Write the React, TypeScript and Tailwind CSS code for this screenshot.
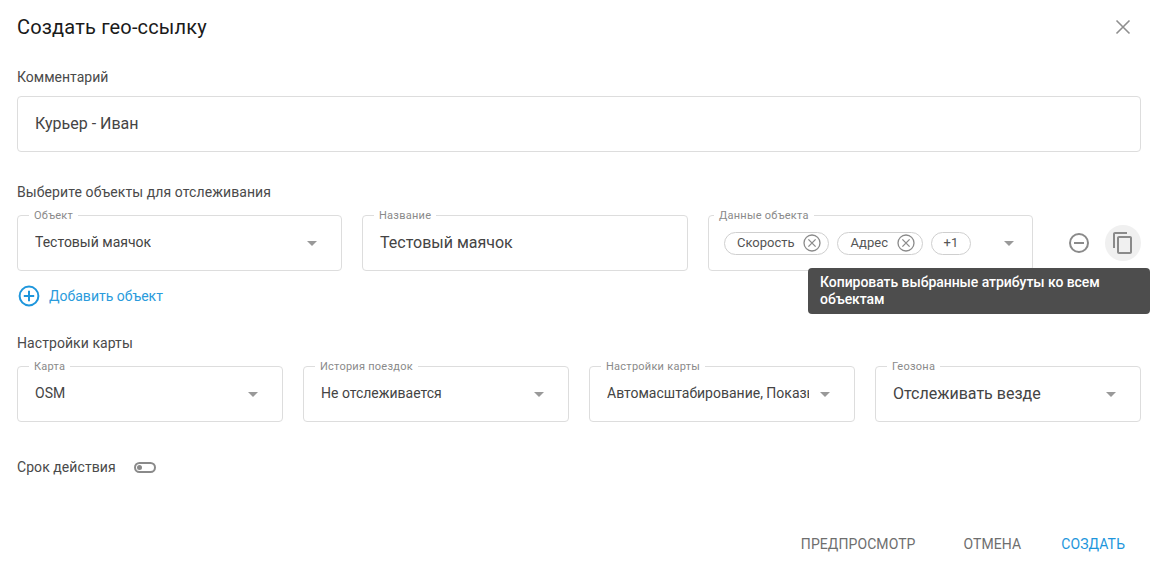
import React from "react";

const Caret = () => (
  <svg width="10" height="5" viewBox="0 0 10 5" className="shrink-0"><path d="M0 0h10L5 5z" fill="#999999" /></svg>
);

const ChipX = () => (
  <svg width="18" height="18" viewBox="0 0 18 18" fill="none" stroke="#8a8a8a" strokeWidth="1.3" className="shrink-0">
    <circle cx="9" cy="9" r="8" />
    <path d="M5.4 5.4l7.2 7.2M12.6 5.4l-7.2 7.2" />
  </svg>
);

function Field({ label, children, labelClass = "left-[11px]", className = "" }: { label: string; children: React.ReactNode; labelClass?: string; className?: string }) {
  return (
    <div className={`relative h-14 rounded border border-[#dddddd] flex items-center ${className}`}>
      <span className={`absolute -top-[7px] ${labelClass} bg-white px-[5px] text-[11px] leading-[13px] text-[#8a8a8a] tracking-[0.25px]`}>{label}</span>
      {children}
    </div>
  );
}

function SelectField({ label, value, large, pl = "pl-[17px]", pr = "pr-[24px]", caretGap }: { label: string; value: string; large?: boolean; pl?: string; pr?: string; caretGap?: string }) {
  return (
    <Field label={label}>
      <div className={`flex w-full items-center justify-between ${pl} ${pr}`}>
        <span className={`${large ? "text-base" : "text-sm mb-[2px]"} text-[#444444] whitespace-nowrap overflow-hidden ${caretGap ?? ""}`}>{value}</span>
        <Caret />
      </div>
    </Field>
  );
}

export default function App() {
  return (
    <div className="relative w-[1153px] h-[568px] overflow-hidden bg-white text-[#3c3c3c]" style={{ fontFamily: "Roboto, sans-serif" }}>
      <div className="flex flex-col pl-[17px] pr-3">
        <div className="flex h-[54px] items-center justify-between">
          <h1 className="text-xl font-normal tracking-[0.17px] text-[#1a1a1a]">Создать гео-ссылку</h1>
          <svg width="16" height="16" viewBox="0 0 16 16" stroke="#8f8f8f" strokeWidth="1.6" className="mr-[10px]"><path d="M1.5 1.5l13 13M14.5 1.5l-13 13" /></svg>
        </div>

        <div className="mt-[14px] text-sm leading-[18px] text-[#4a4a4a]">Комментарий</div>
        <div className="mt-[10px] flex h-14 items-center rounded border border-[#dddddd] pl-[17px] text-base text-[#444444]">Курьер - Иван</div>

        <div className="mt-[31px] text-sm leading-[18px] text-[#4a4a4a] tracking-[0.09px]">Выберите объекты для отслеживания</div>
        <div className="mt-[14px] flex items-center gap-5">
          <div className="w-[325px]"><SelectField label="Объект" value="Тестовый маячок" /></div>
          <div className="w-[326px]">
            <Field label="Название"><span className="pl-[17px] text-base text-[#444444]">Тестовый маячок</span></Field>
          </div>
          <div className="w-[325px]">
            <Field label="Данные объекта" labelClass="left-[5px]">
              <div className="flex w-full items-center pl-[15px] pr-[18px]">
                <div className="flex items-center gap-2 text-[13px] text-[#555555]">
                  <span className="flex h-[23px] items-center gap-[8px] rounded-full border border-[#cfcfcf] pl-3 pr-[7px]">Скорость<ChipX /></span>
                  <span className="flex h-[23px] items-center gap-[9px] rounded-full border border-[#cfcfcf] pl-[13px] pr-[7px]">Адрес<ChipX /></span>
                  <span className="flex h-[23px] w-10 items-center justify-center rounded-full border border-[#cfcfcf]">+1</span>
                </div>
                <span className="ml-auto"><Caret /></span>
              </div>
            </Field>
          </div>
          <div className="ml-[14px] flex items-center gap-[14px]">
            <svg width="24" height="24" viewBox="0 0 24 24" fill="none" stroke="#8a8a8a" strokeWidth="2"><circle cx="12" cy="12" r="9" /><path d="M7 12h10" /></svg>
            <div className="flex h-9 w-9 items-center justify-center rounded-full bg-[#f0f0f0]">
              <svg width="24" height="24" viewBox="0 0 24 24" fill="#8a8a8a"><path d="M16 1H4c-1.1 0-2 .9-2 2v14h2V3h12V1zm3 4H8c-1.1 0-2 .9-2 2v14c0 1.1.9 2 2 2h11c1.1 0 2-.9 2-2V7c0-1.1-.9-2-2-2zm0 16H8V7h11v14z" /></svg>
            </div>
          </div>
        </div>

        <div className="mt-[14px] mb-[1px] flex items-center gap-[9px] pl-[1px]">
          <svg width="22" height="22" viewBox="0 0 22 22" fill="none" stroke="#1e96dc" strokeWidth="2"><circle cx="11" cy="11" r="9.4" /><path d="M11 5.8v10.4M5.8 11h10.4" /></svg>
          <span className="text-sm text-[#2a9bdc]">Добавить объект</span>
        </div>

        <div className="mt-[26px] text-sm leading-[18px] text-[#4a4a4a] tracking-[0.07px]">Настройки карты</div>
        <div className="mt-[14px] grid grid-cols-4 gap-5">
          <SelectField label="Карта" value="OSM" />
          <SelectField label="История поездок" value="Не отслеживается" pl="pl-[17px]" />
          <SelectField label="Настройки карты" value="Автомасштабирование, Показывать" pl="pl-[17px]" pr="pr-[24px]" caretGap="mr-[11px]" />
          <SelectField label="Геозона" value="Отслеживать везде" large />
        </div>

        <div className="mt-[36px] flex h-[18px] items-center gap-[18px]">
          <span className="text-sm text-[#4a4a4a] tracking-[0.07px]">Срок действия</span>
          <span className="flex h-[11px] w-[22px] items-center rounded-full border-2 border-[#8a8a8a] pl-[1px]"><span className="h-[5px] w-[5px] rounded-full bg-[#8a8a8a]" /></span>
        </div>

        <div className="mt-[58px] flex items-center justify-end gap-10 pr-[16px] text-sm font-normal tracking-[0.08px] text-[#6e6e6e]">
          <span className="mr-2">ПРЕДПРОСМОТР</span>
          <span>ОТМЕНА</span>
          <span className="text-[#1e96dc]">СОЗДАТЬ</span>
        </div>
      </div>

      <div className="absolute left-[808px] top-[268px] w-[342px] rounded bg-[#4d4d4d] px-3 py-[6px] text-sm font-medium leading-[17px] tracking-[-0.05px] text-white">
        Копировать выбранные атрибуты ко всем объектам
      </div>
    </div>
  );
}
